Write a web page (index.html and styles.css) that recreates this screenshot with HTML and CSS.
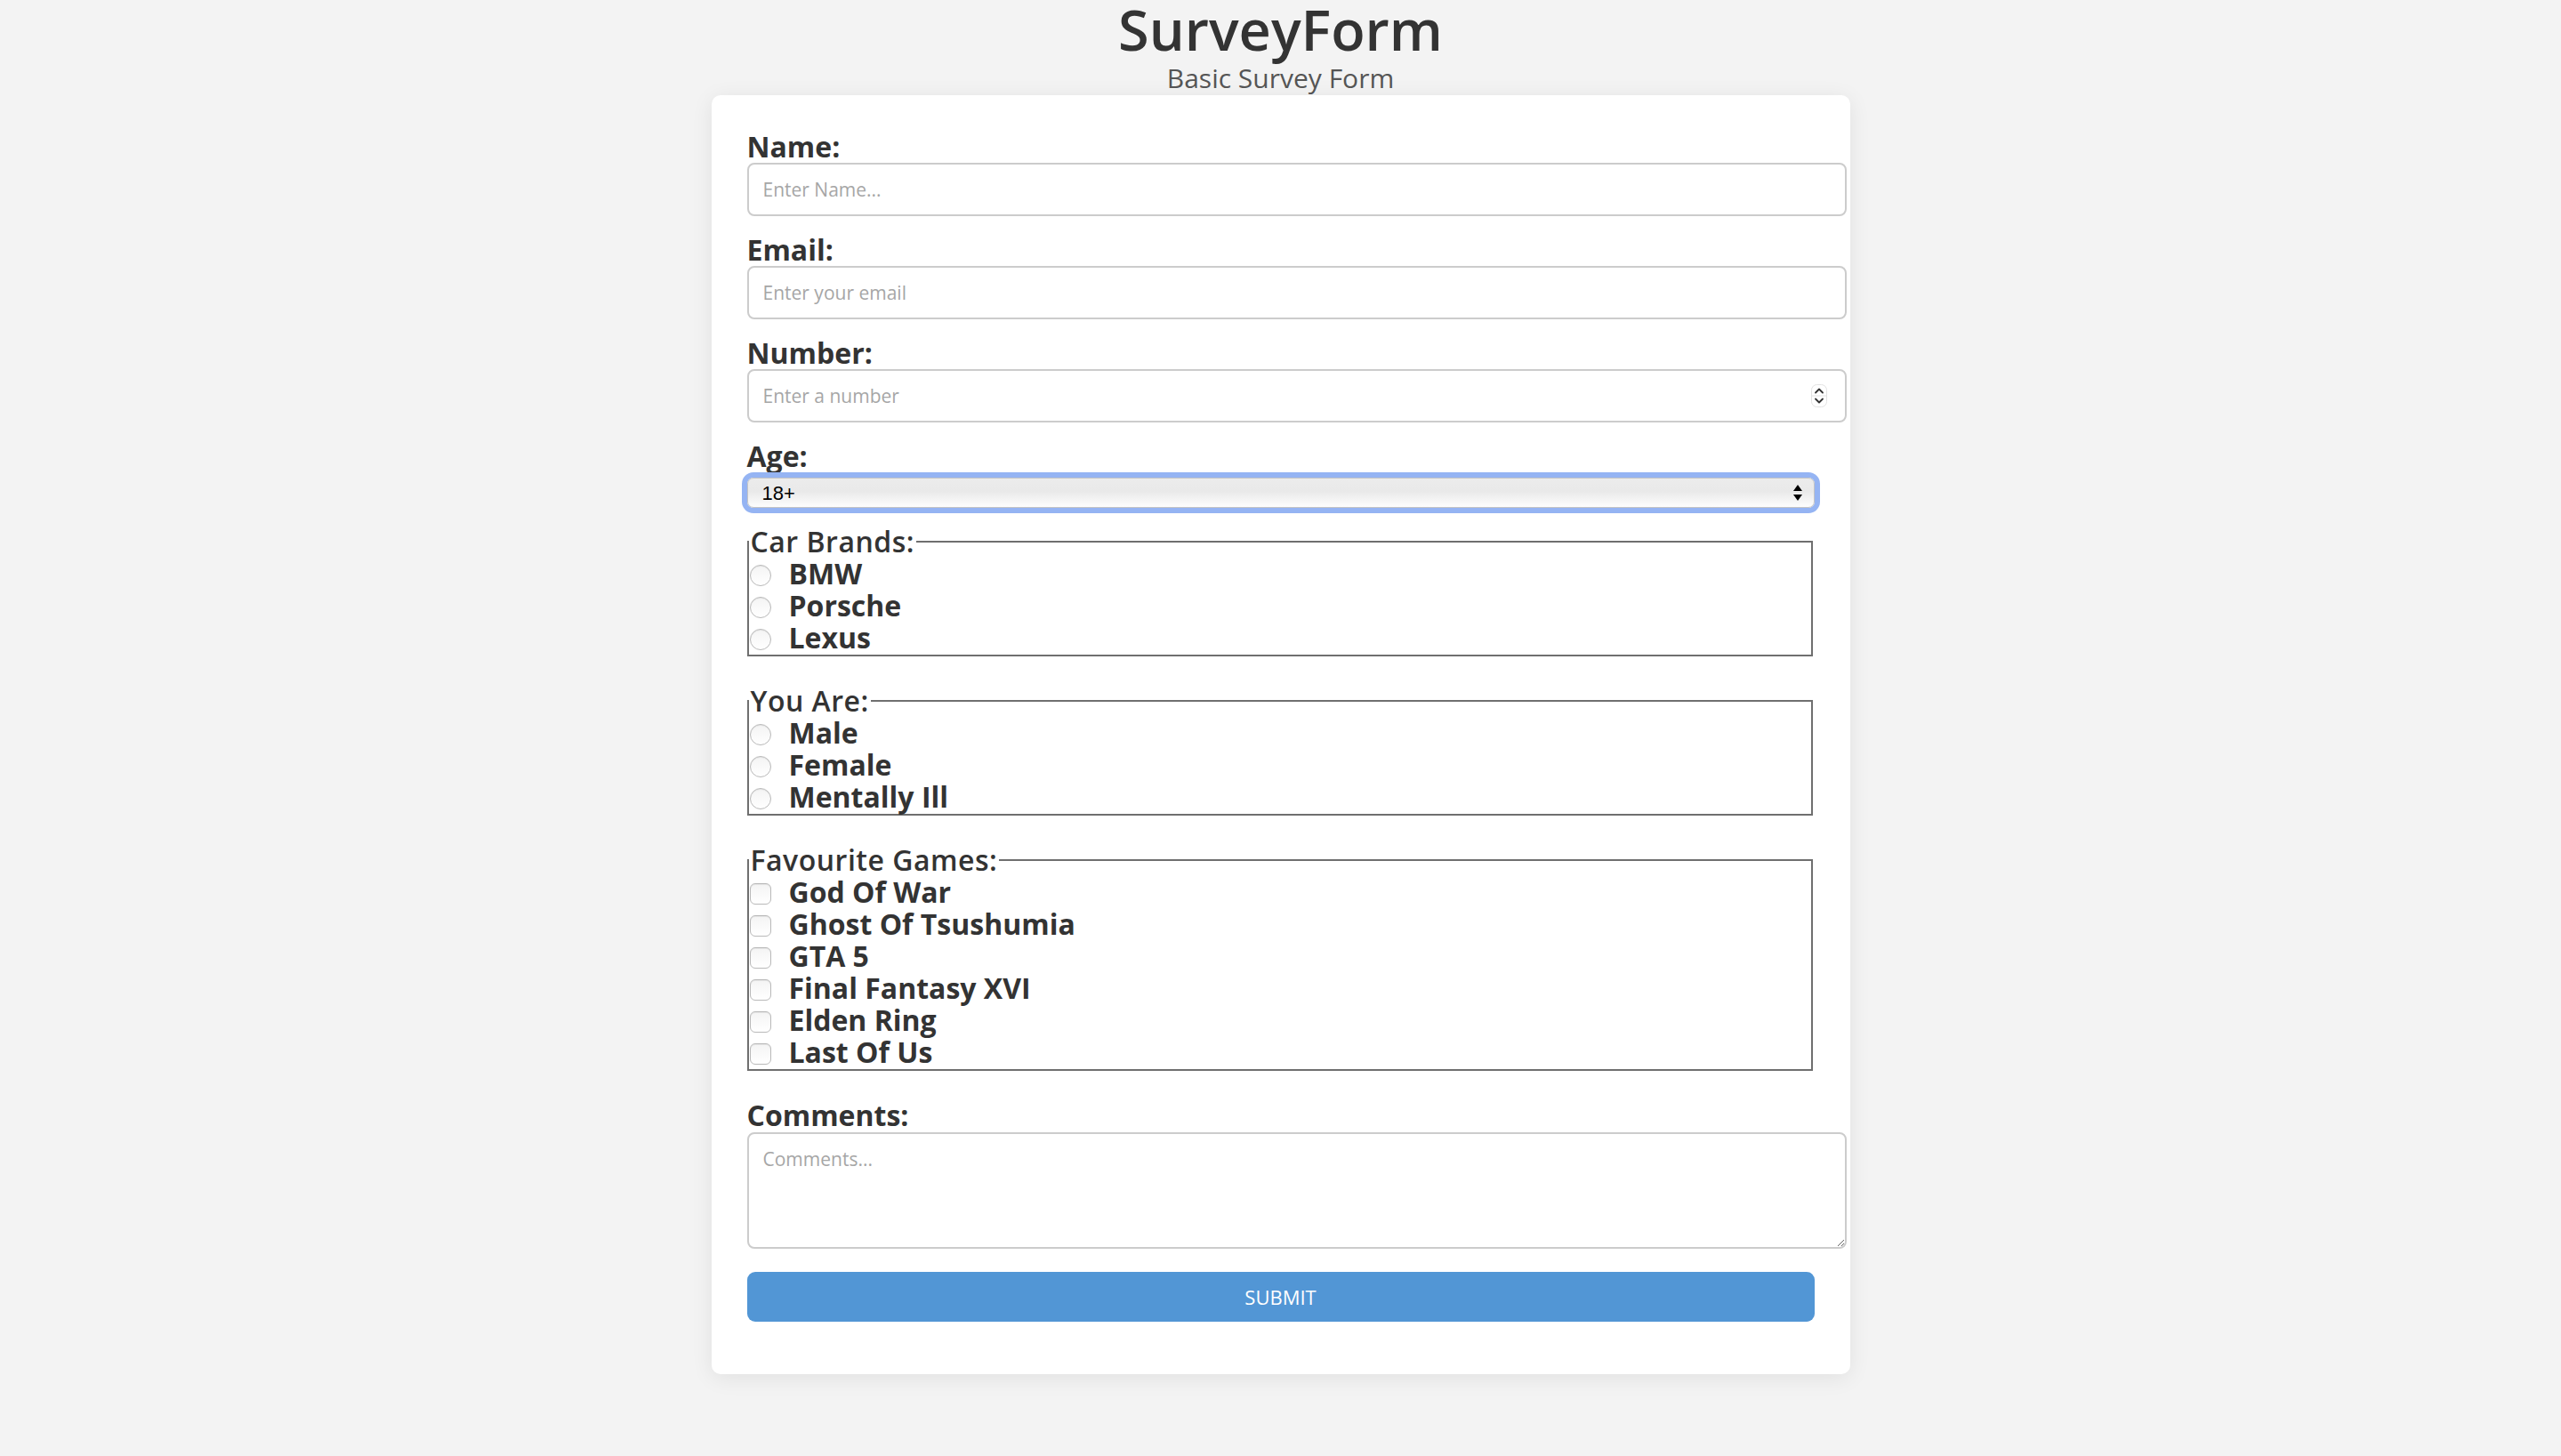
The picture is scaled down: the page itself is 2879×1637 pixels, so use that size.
FILE: index.html
```html
<!DOCTYPE html>
<html lang="en">
<head>
<meta charset="utf-8">
<title>SurveyForm</title>
<link rel="stylesheet" href="styles.css">
</head>
<body>
<header class="header">
  <h1 class="title">SurveyForm</h1>
  <p class="subtitle">Basic Survey Form</p>
</header>
<form class="card">
  <label class="field-label" for="name">Name:</label>
  <input class="text-input" id="name" type="text" placeholder="Enter Name...">

  <label class="field-label" for="email">Email:</label>
  <input class="text-input" id="email" type="email" placeholder="Enter your email">

  <label class="field-label" for="number">Number:</label>
  <div class="number-wrap">
    <input class="text-input number-input" id="number" type="number" placeholder="Enter a number">
    <span class="spinner">
      <svg width="18" height="26" viewBox="0 0 18 26">
        <rect x="0.5" y="0.5" width="17" height="25" rx="6" fill="#fff" stroke="#e2e2e2"/>
        <line x1="1" y1="13" x2="17" y2="13" stroke="#e2e2e2"/>
        <path d="M5 9.5 L9 5.5 L13 9.5" fill="none" stroke="#333" stroke-width="1.8" stroke-linecap="round" stroke-linejoin="round"/>
        <path d="M5 16.5 L9 20.5 L13 16.5" fill="none" stroke="#333" stroke-width="1.8" stroke-linecap="round" stroke-linejoin="round"/>
      </svg>
    </span>
  </div>

  <label class="field-label" for="age">Age:</label>
  <div class="select-wrap">
    <select class="age-select" id="age">
      <option>18+</option>
      <option>Under 18</option>
    </select>
    <span class="select-arrows">
      <svg width="10" height="18" viewBox="0 0 10 18">
        <path d="M5 0 L10 7 L0 7 Z" fill="#000"/>
        <path d="M5 18 L10 11 L0 11 Z" fill="#000"/>
      </svg>
    </span>
  </div>

  <fieldset class="group">
    <legend class="group-legend">Car Brands:</legend>
    <div class="option"><input class="radio" type="radio" name="car" id="bmw"><label for="bmw">BMW</label></div>
    <div class="option"><input class="radio" type="radio" name="car" id="porsche"><label for="porsche">Porsche</label></div>
    <div class="option"><input class="radio" type="radio" name="car" id="lexus"><label for="lexus">Lexus</label></div>
  </fieldset>

  <fieldset class="group">
    <legend class="group-legend">You Are:</legend>
    <div class="option"><input class="radio" type="radio" name="you" id="male"><label for="male">Male</label></div>
    <div class="option"><input class="radio" type="radio" name="you" id="female"><label for="female">Female</label></div>
    <div class="option"><input class="radio" type="radio" name="you" id="ill"><label for="ill">Mentally Ill</label></div>
  </fieldset>

  <fieldset class="group">
    <legend class="group-legend">Favourite Games:</legend>
    <div class="option"><input class="check" type="checkbox" id="g1"><label for="g1">God Of War</label></div>
    <div class="option"><input class="check" type="checkbox" id="g2"><label for="g2">Ghost Of Tsushumia</label></div>
    <div class="option"><input class="check" type="checkbox" id="g3"><label for="g3">GTA 5</label></div>
    <div class="option"><input class="check" type="checkbox" id="g4"><label for="g4">Final Fantasy XVI</label></div>
    <div class="option"><input class="check" type="checkbox" id="g5"><label for="g5">Elden Ring</label></div>
    <div class="option"><input class="check" type="checkbox" id="g6"><label for="g6">Last Of Us</label></div>
  </fieldset>

  <label class="field-label comments-label" for="comments">Comments:</label>
  <textarea class="text-input comments" id="comments" placeholder="Comments..."></textarea>

  <button class="submit" type="submit">SUBMIT</button>
</form>
</body>
</html>
```

FILE: styles.css
```css
* {
  font-family: "Open Sans", "Noto Sans", sans-serif;
}

html, body {
  margin: 0;
  padding: 0;
}

body {
  background: #f3f3f3;
  color: #333;
  padding-bottom: 60px;
}

.header {
  text-align: center;
}

.title {
  margin: 0;
  font-size: 63px;
  font-weight: 600;
  line-height: 66px;
  color: #333;
}

.subtitle {
  margin: 5px 0 0;
  font-size: 30px;
  line-height: 34px;
  color: #555;
}

.card {
  box-sizing: border-box;
  width: 1280px;
  margin: 2px auto 0;
  padding: 40px 40px 59px;
  background: #fff;
  border-radius: 10px;
  box-shadow: 0 4px 24px rgba(0, 0, 0, 0.08);
}

.field-label {
  display: block;
  font-size: 32px;
  font-weight: 700;
  line-height: 36px;
  color: #333;
}

.text-input {
  display: block;
  box-sizing: border-box;
  width: 1236px;
  height: 60px;
  margin: 0 0 20px;
  padding: 0 16px;
  border: 2px solid #ccc;
  border-radius: 8px;
  font-size: 21px;
  color: #333;
  background: #fff;
  outline: none;
}

.text-input::placeholder {
  color: #a6a6a6;
}

.number-wrap {
  position: relative;
}

.number-input::-webkit-inner-spin-button,
.number-input::-webkit-outer-spin-button {
  -webkit-appearance: none;
  margin: 0;
}

.spinner {
  position: absolute;
  left: 1196px;
  top: 17px;
  display: block;
  line-height: 0;
}

.select-wrap {
  position: relative;
  margin: 6px 0 20px;
}

.age-select {
  display: block;
  width: 100%;
  height: 34px;
  margin: 0;
  padding: 0 16px;
  -webkit-appearance: none;
  appearance: none;
  border: 1px solid #c4c4c4;
  border-radius: 7px;
  background: linear-gradient(to bottom, #ececec 0%, #e9e9e9 45%, #f6f6f6 80%, #fdfdfd 100%);
  box-shadow: 0 0 0 6px #95b4f3;
  font-family: "Liberation Sans", "DejaVu Sans", sans-serif;
  font-size: 22px;
  color: #000;
  outline: none;
}

.select-arrows {
  position: absolute;
  right: 14px;
  top: 8px;
  line-height: 0;
  pointer-events: none;
}

.group {
  box-sizing: border-box;
  width: 1198px;
  margin: 0 0 32px;
  padding: 0 0 1px;
  border: 2px solid #6f6f6f;
  min-width: 0;
}

.group-legend {
  padding: 0 2px;
  font-size: 32px;
  font-weight: 600;
  letter-spacing: 0.5px;
  line-height: 36px;
  color: #333;
}

.option {
  display: flex;
  align-items: center;
  height: 36px;
}

.option label {
  font-size: 32px;
  font-weight: 700;
  line-height: 36px;
  color: #333;
  margin-left: 20px;
}

.radio,
.check {
  -webkit-appearance: none;
  appearance: none;
  box-sizing: border-box;
  width: 24px;
  height: 24px;
  margin: 4px 0 0 1px;
  border: 1px solid #b9b9b9;
  background: linear-gradient(to bottom, #f4f4f4, #ffffff);
  box-shadow: inset 0 1px 1px rgba(0, 0, 0, 0.07);
}

.radio {
  border-radius: 50%;
}

.check {
  border-radius: 6px;
}

.comments-label {
  margin-top: 1px;
  margin-bottom: 1px;
}

.comments {
  height: 131px;
  padding: 14px 16px;
  margin-bottom: 26px;
  resize: vertical;
}

.submit {
  display: block;
  width: 100%;
  height: 56px;
  margin: 0;
  border: none;
  border-radius: 9px;
  background: #5296d5;
  color: #fff;
  font-size: 22px;
  font-weight: 400;
  cursor: pointer;
}
```
